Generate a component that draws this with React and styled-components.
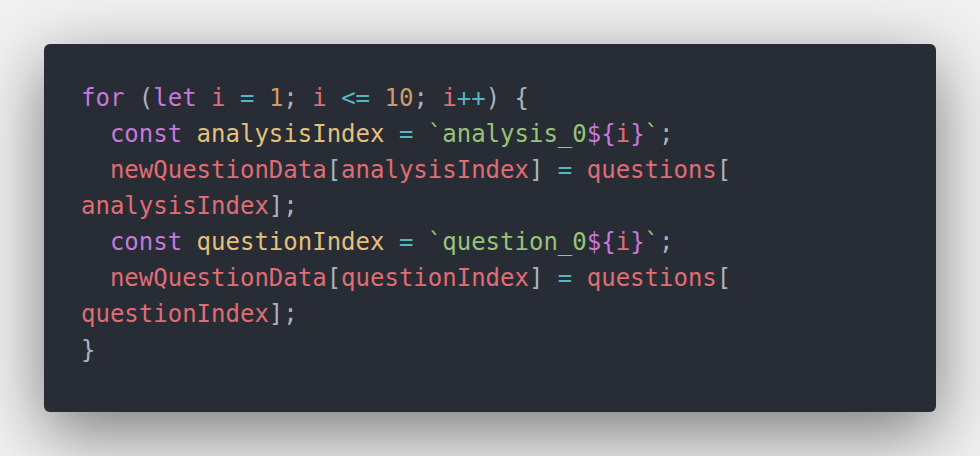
import React from "react";
import styled, { createGlobalStyle } from "styled-components";

const Global = createGlobalStyle`
  html, body { margin: 0; padding: 0; background: #f1f1f1; }
  body { width: 980px; height: 456px; overflow: hidden; }
`;

const Page = styled.div`
  box-sizing: border-box;
  width: 980px;
  height: 456px;
  padding: 44px;
  background: #f1f1f1;
`;

const Card = styled.pre`
  box-sizing: border-box;
  margin: 0;
  height: 368px;
  padding: 36px 38px 44px 37px;
  background: #282c34;
  border-radius: 6px;
  box-shadow: 0 20px 68px rgba(0, 0, 0, 0.5);
  font-family: "DejaVu Sans Mono", "Liberation Mono", monospace;
  font-size: 24px;
  line-height: 36px;
  color: #abb2bf;
  overflow: hidden;
`;

const Line = styled.div`
  white-space: pre;
  height: 36px;
`;

const colors = {
  k: "#c678dd",
  v: "#e06c75",
  n: "#d19a66",
  o: "#56b6c2",
  p: "#abb2bf",
  c: "#e5c07b",
  s: "#98c379",
};

const Tok = styled.span`
  color: ${(p) => colors[p.$t] || "#abb2bf"};
`;

const lines = [
  [["k", "for"], ["p", " ("], ["k", "let"], ["p", " "], ["v", "i"], ["p", " "], ["o", "="], ["p", " "], ["n", "1"], ["p", "; "], ["v", "i"], ["p", " "], ["o", "<="], ["p", " "], ["n", "10"], ["p", "; "], ["v", "i"], ["o", "++"], ["p", ") {"]],
  [["p", "  "], ["k", "const"], ["p", " "], ["c", "analysisIndex"], ["p", " "], ["o", "="], ["p", " "], ["s", "`analysis_0"], ["k", "${"], ["v", "i"], ["k", "}"], ["s", "`"], ["p", ";"]],
  [["p", "  "], ["v", "newQuestionData"], ["p", "["], ["v", "analysisIndex"], ["p", "]"], ["p", " "], ["o", "="], ["p", " "], ["v", "questions"], ["p", "["]],
  [["v", "analysisIndex"], ["p", "];"]],
  [["p", "  "], ["k", "const"], ["p", " "], ["c", "questionIndex"], ["p", " "], ["o", "="], ["p", " "], ["s", "`question_0"], ["k", "${"], ["v", "i"], ["k", "}"], ["s", "`"], ["p", ";"]],
  [["p", "  "], ["v", "newQuestionData"], ["p", "["], ["v", "questionIndex"], ["p", "]"], ["p", " "], ["o", "="], ["p", " "], ["v", "questions"], ["p", "["]],
  [["v", "questionIndex"], ["p", "];"]],
  [["p", "}"]],
];

export default function App() {
  return (
    <>
      <Global />
      <Page>
        <Card>
          {lines.map((toks, i) => (
            <Line key={i}>
              {toks.map(([t, s], j) => (
                <Tok key={j} $t={t}>
                  {s}
                </Tok>
              ))}
            </Line>
          ))}
        </Card>
      </Page>
    </>
  );
}
